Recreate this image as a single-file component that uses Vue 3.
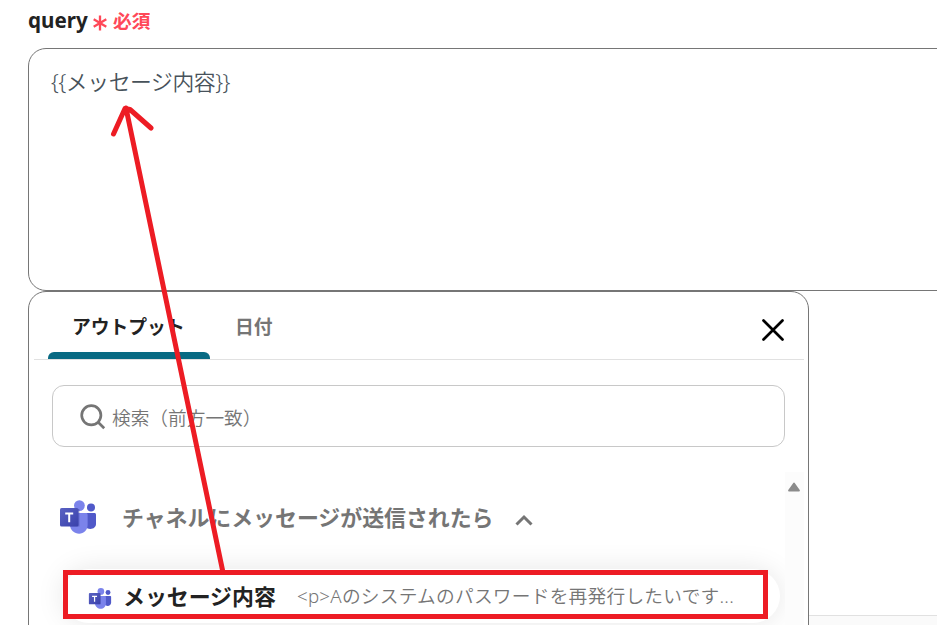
<script setup>
import { ref } from 'vue'

// States
const query = ref('{{メッセージ内容}}')
const search = ref('')
const activeTab = ref('output')
const open = ref(true)

const tabs = [
    { id: 'output', label: 'アウトプット' },
    { id: 'date', label: '日付' }
]

const outputs = [
    { name: 'メッセージ内容', sample: '<p>Aのシステムのパスワードを再発行したいです...' }
]
</script>

<template>
    <div class="page">
        <svg class="defs" width="0" height="0">
            <defs>
                <linearGradient id="teamsTile" x1="0" y1="0" x2="1" y2="1">
                    <stop offset="0" stop-color="#5a62c3" />
                    <stop offset="1" stop-color="#3940ab" />
                </linearGradient>
                <symbol id="teams" viewBox="0 0 38 34">
                    <circle cx="32" cy="7.4" r="4" fill="#5059c9" />
                    <path d="M26 13h9.5c.8 0 1.5.7 1.5 1.5v9.3c0 3.3-2.6 5.2-5.6 5.2-2.4 0-4.4-1.2-5.4-3z" fill="#5059c9" />
                    <circle cx="20.4" cy="5.6" r="5.4" fill="#7b83eb" />
                    <path d="M12 13h15.2c.8 0 1.4.6 1.4 1.4V25c0 5-3.900 8.700-8.500 8.700S11 30 11 25z" fill="#7b83eb" />
                    <path d="M12 9h8.500v17.500H11z" fill="#4048a0" opacity=".4" />
                    <rect x="1" y="8" width="18.5" height="18.5" rx="1.6" fill="url(#teamsTile)" />
                    <path d="M6.200 13.500h8M10.200 13.500v8.700" stroke="#fff" stroke-width="2" />
                </symbol>
            </defs>
        </svg>

        <div class="field-label">
            <span class="field-name">query</span>
            <svg class="asterisk" viewBox="0 0 14 16">
                <path d="M7 .5v15M.7 4.300l12.600 7.400M13.300 4.300L.7 11.700" />
            </svg>
            <span class="required">必須</span>
        </div>

        <div class="query-box">{{ query }}</div>

        <div class="lower">
            <div class="panel">
                <div class="tabs">
                    <button v-for="tab in tabs" :key="tab.id" class="tab" :class="{ active: activeTab === tab.id }"
                        @click="activeTab = tab.id">{{ tab.label }}</button>
                    <svg class="close" viewBox="0 0 24 24">
                        <path d="M2.500 2.500l19 19M21.500 2.500l-19 19" />
                    </svg>
                </div>

                <label class="search">
                    <svg viewBox="0 0 26 26">
                        <circle cx="11.3" cy="11.3" r="9.6" />
                        <path d="M18.200 18.200l6 6" />
                    </svg>
                    <input v-model="search" placeholder="検索（前方一致）">
                </label>

                <div class="results">
                    <div class="list">
                        <div class="group" @click="open = !open">
                            <svg class="teams"><use href="#teams" /></svg>
                            <span class="group-name">チャネルにメッセージが送信されたら</span>
                            <svg class="chevron" viewBox="0 0 18 12">
                                <path d="M1.500 10.500L9 3l7.500 7.500" />
                            </svg>
                        </div>
                        <template v-if="open">
                            <div v-for="item in outputs" :key="item.name" class="item">
                                <svg class="teams-small"><use href="#teams" /></svg>
                                <span class="item-name">{{ item.name }}</span>
                                <span class="sample">{{ item.sample }}</span>
                            </div>
                        </template>
                    </div>
                    <div class="track">
                        <svg viewBox="0 0 14 10">
                            <path d="M7 1.500L12 8.500H2z" />
                        </svg>
                    </div>
                </div>
            </div>
            <div class="side">
                <div class="footer"></div>
            </div>
        </div>

        <svg class="marker" viewBox="0 0 937 625">
            <path d="M222.500 570L126 108M113.500 134L125 108.500L130 109.500L151 128" />
            <rect x="65.5" y="572.5" width="700" height="44" />
        </svg>
    </div>
</template>

<style>
body {
    margin: 0;
    overflow: hidden;
}
</style>

<style scoped>
.page {
    position: relative;
    box-sizing: border-box;
    height: 625px;
    padding-left: 28px;
    overflow: hidden;
    background: #fff;
    font-family: "Noto Sans", "Noto Sans CJK JP", sans-serif;
    color: #222;
}
.defs {
    position: absolute;
}
.field-label {
    display: flex;
    align-items: center;
    height: 48px;
    padding-bottom: 9px;
    box-sizing: border-box;
    font-weight: 700;
}
.field-name {
    width: 65px;
    font-size: 20.6px;
}
.asterisk {
    width: 14px;
    height: 16px;
    margin: 7px 6px 0 0;
    fill: none;
    stroke: #ff4858;
    stroke-width: 2.3;
}
.required {
    font-family: "Noto Sans CJK JP", sans-serif;
    font-size: 18.7px;
    color: #ff4858;
}
.query-box {
    box-sizing: border-box;
    width: 960px;
    height: 243px;
    padding: 16px 22px;
    border: 1px solid #767676;
    border-radius: 18px;
    font-size: 21.8px;
    font-weight: 350;
    line-height: 34px;
    letter-spacing: -0.4px;
    color: #47525a;
}
.lower {
    display: flex;
    height: 334px;
}
.panel {
    box-sizing: border-box;
    flex: none;
    width: 781px;
    height: 360px;
    border: 1px solid #767676;
    border-radius: 18px;
}
.tabs {
    display: flex;
    height: 67px;
    margin: 0 4px 0 5px;
    padding-left: 14px;
    border-bottom: 1px solid #e1e1e1;
}
.tab {
    position: relative;
    width: 162px;
    height: 67px;
    padding: 0 0 0 25px;
    border: 0;
    background: none;
    text-align: left;
    font: 700 18.8px/67px "Noto Sans CJK JP", sans-serif;
    color: #757575;
}
.tab.active {
    padding-left: 24px;
    color: #222;
}
.tab.active::after {
    content: "";
    position: absolute;
    left: 0;
    right: 0;
    bottom: 0;
    height: 7px;
    border-radius: 6px 6px 0 0;
    background: #086a83;
}
.close {
    width: 24px;
    height: 24px;
    margin: 25.5px 19.5px 0 auto;
    fill: none;
    stroke: #000;
    stroke-width: 2.7;
    stroke-linecap: round;
}
.search {
    display: flex;
    align-items: center;
    box-sizing: border-box;
    width: 733px;
    height: 62px;
    margin: 25px 0 0 23px;
    padding-left: 27px;
    border: 1px solid #c8c8c8;
    border-radius: 12px;
}
.search svg {
    width: 26px;
    height: 26px;
    margin: 2px 6px 0 0;
    fill: none;
    stroke: #757575;
    stroke-width: 2.7;
}
.search input {
    flex: 1;
    min-width: 0;
    padding: 0;
    border: 0;
    outline: 0;
    background: none;
    font: 350 18.7px "Noto Sans CJK JP", sans-serif;
}
.search input::placeholder {
    color: #757575;
}
.results {
    display: flex;
    height: 180px;
    margin-top: 25px;
}
.list {
    width: 756px;
    overflow: hidden;
}
.group {
    display: flex;
    align-items: center;
    height: 97px;
    padding: 0 0 0 30px;
    box-sizing: border-box;
}
.teams {
    width: 38px;
    height: 34px;
    margin: -7px 25px 0 0;
}
.group-name {
    margin-top: -8px;
    font: 700 21.9px "Noto Sans CJK JP", sans-serif;
    color: #757575;
}
.chevron {
    width: 18px;
    height: 12px;
    margin: -2px 0 0 22px;
    fill: none;
    stroke: #757575;
    stroke-width: 3;
}
.item {
    display: flex;
    align-items: center;
    box-sizing: border-box;
    width: 718px;
    height: 54px;
    margin-left: 33px;
    padding-left: 26px;
    border-radius: 27px;
    box-shadow: 0 0 28px rgba(0, 0, 0, .1);
    white-space: nowrap;
}
.teams-small {
    width: 24px;
    height: 21px;
    margin: 4px 11px 0 0;
}
.item-name {
    width: 174px;
    margin-top: -2px;
    font: 700 21.9px "Noto Sans CJK JP", sans-serif;
}
.sample {
    margin-top: -3px;
    font-size: 18.7px;
    font-weight: 350;
    letter-spacing: 0.25px;
    color: #757575;
}
.track {
    width: 19px;
    background: #fcfcfc;
}
.track svg {
    display: block;
    width: 14px;
    height: 10px;
    margin: 10px 0 0 2px;
    fill: #8b8b8b;
    stroke: #8b8b8b;
    stroke-width: 1.8;
    stroke-linejoin: round;
}
.side {
    display: flex;
    flex: 1;
    align-items: flex-end;
}
.footer {
    flex: 1;
    height: 9px;
    border-top: 1px solid #e1e1e1;
    background: #fafafa;
}
/* red callout drawn over the form */
.marker {
    position: absolute;
    inset: 0;
    width: 937px;
    height: 625px;
    pointer-events: none;
    fill: none;
    stroke: #ed1c24;
    stroke-width: 5;
}
.marker path {
    stroke-linecap: round;
    stroke-linejoin: round;
}
</style>
